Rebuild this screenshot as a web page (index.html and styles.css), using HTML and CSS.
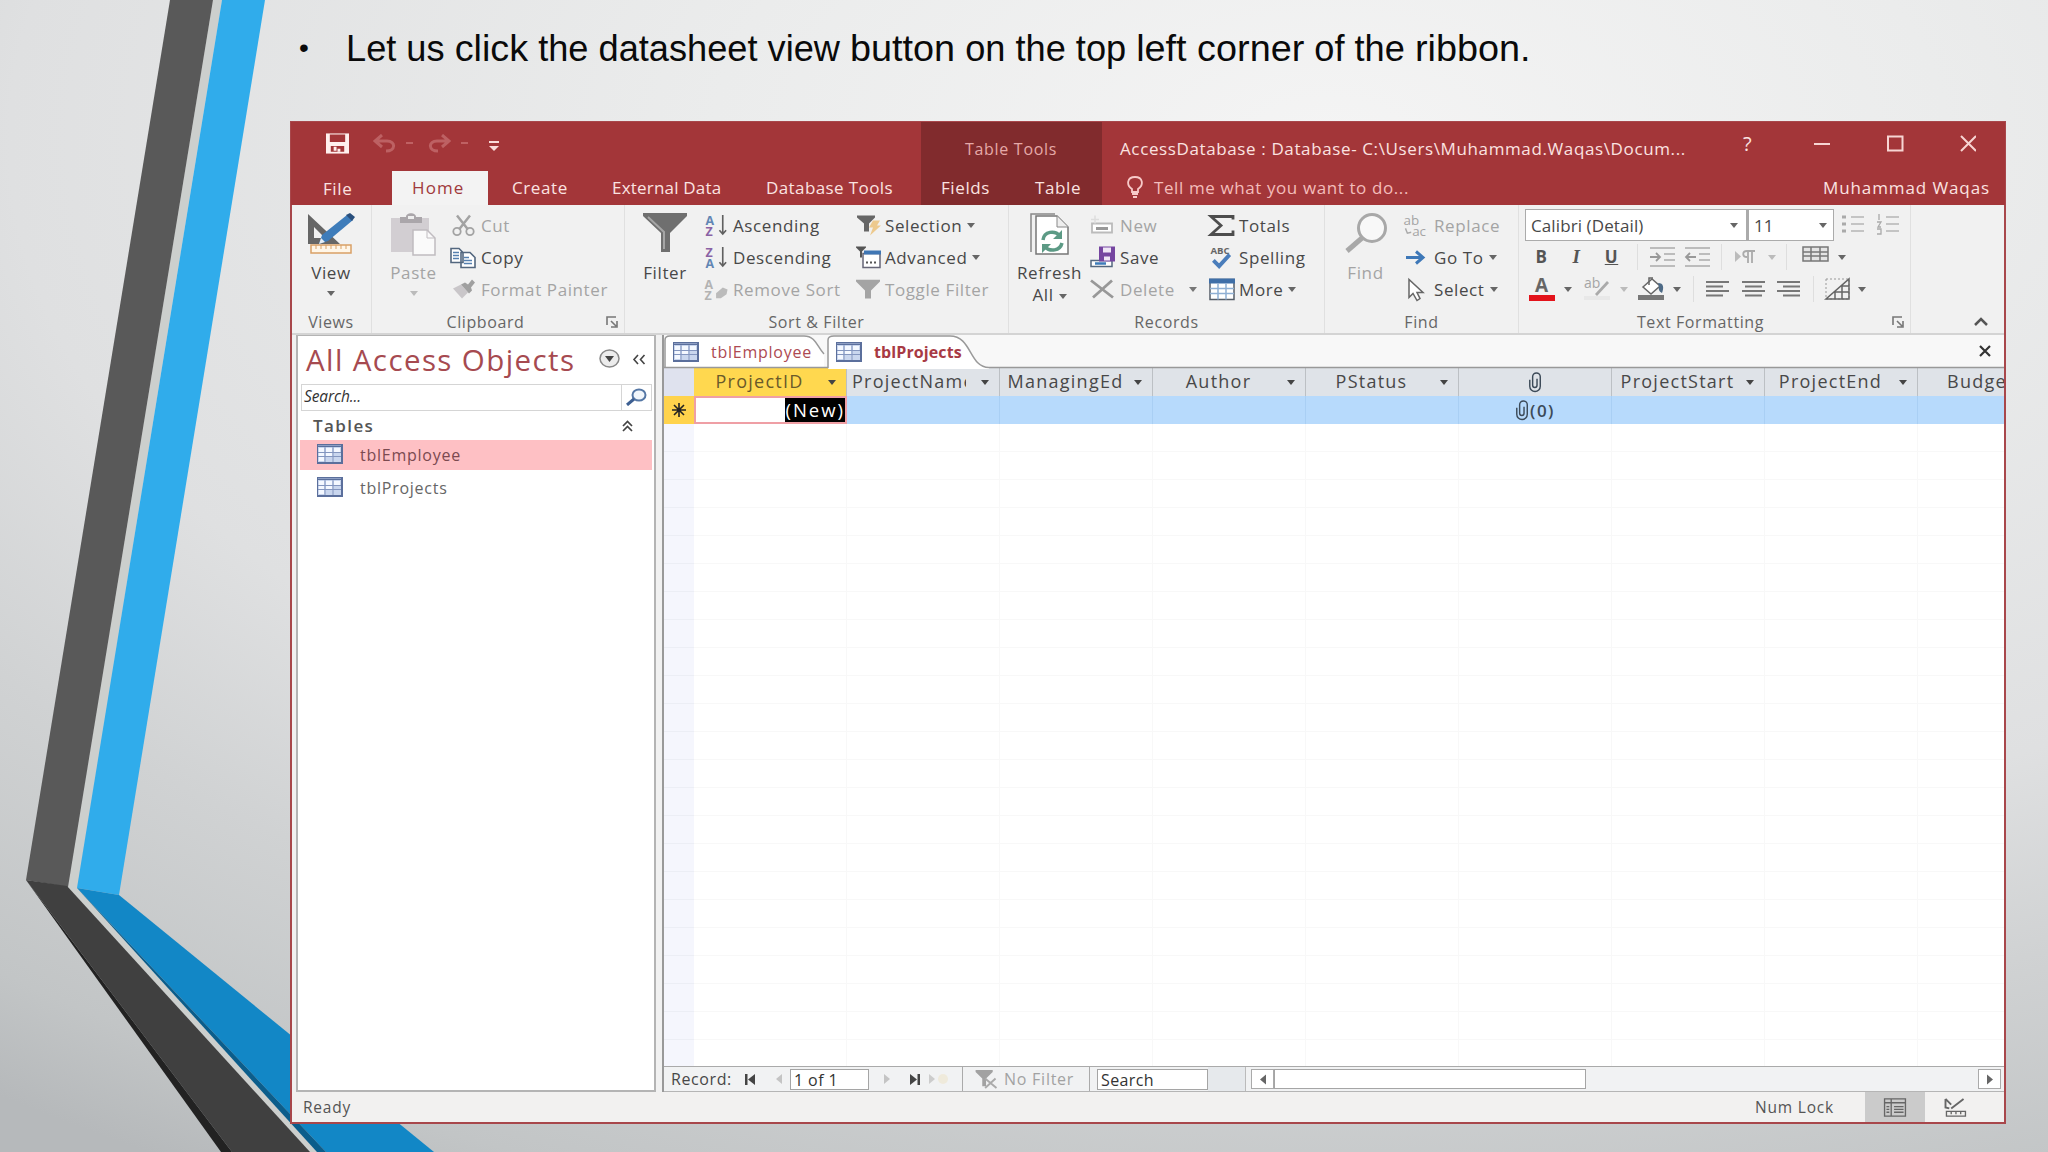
FILE: index.html
```html
<!DOCTYPE html>
<html lang="en">
<head>
  <meta charset="UTF-8">
  <title>Datasheet View</title>
  <link rel="stylesheet" href="styles.css">
</head>
<body>

  <!-- shared icons -->
  <svg class="defs">
    <symbol id="table" viewBox="0 0 26 20">
      <rect x="0" y="0" width="26" height="20" fill="#5b6f9c"/>
      <rect x="1" y="3" width="23" height="15" fill="#c9d6ee"/>
      <path d="M2 4h5v4H2zM2 9h5v3H2zM2 13h5v4H2zM9 4h6v4H9zM9 9h6v3H9zM17 4h6v4h-6z" fill="#f4f8ff"/>
      <path d="M1 8.5h23M1 12.5h23M8 3v15M16 3v15" stroke="#8496bf"/>
      <path d="M1 1.5h23" stroke="#8e9fc4"/>
    </symbol>
    <symbol id="funnel" viewBox="0 0 44 40"><path d="M0 0h44v3L27 20v19H18V20L0 3z" fill="#6f6f6f"/><path d="M5 4l16 15v17" fill="none" stroke="#a5a5a5" stroke-width="2"/></symbol>
    <symbol id="funnel-s" viewBox="0 0 24 20"><path d="M0 0h24v2l-9 9v8H9v-8L0 2z" fill="currentColor"/></symbol>
    <symbol id="down" viewBox="0 0 8 5"><path d="M0 0h8L4 5z" fill="currentColor"/></symbol>
    <symbol id="launcher" viewBox="0 0 12 12"><path d="M1 9V1h9M5 5l5 5M11 5v6H5" fill="none" stroke="#777" stroke-width="1.6"/></symbol>
    <symbol id="clip" viewBox="0 0 14 22"><path d="M1 8v7a5.500 5.500 0 0 0 11 0V5a4 4 0 0 0-8 0v9a2.300 2.300 0 0 0 4.600 0V7" fill="none" stroke="currentColor" stroke-width="1.500"/></symbol>
    <symbol id="lines" viewBox="0 0 24 18"><path d="M10 2h13M10 9h13M10 16h13" stroke="#b5b5b5" stroke-width="1.500"/></symbol>
  </svg>

  <!-- slide decoration -->
  <svg class="decor" viewBox="0 0 450 1152">
    <path d="M213 0h9L77 888l240 264h-7L68 887z" fill="#cccfcd"/>
    <path d="M170 0h43L68 887l-42-7z" fill="#595959"/>
    <path d="M26 880l41 6 243 266h-78z" fill="#404040"/>
    <path d="M26 880l206 272h-11z" fill="#222"/>
    <path d="M222 0h43L119 895l-42-7z" fill="#30aceb"/>
    <path d="M77 888l42 7 315 257H326z" fill="#1287c6"/>
    <path d="M77 888l249 264h-9z" fill="#0b5d8b"/>
  </svg>

  <div class="slide">
    <div class="bullet"><span class="dot">•</span><p>Let us <b>click</b> the datasheet view <b>button</b> on the top <b>left corner</b> of the <b>ribbon.</b></p></div>

    <div class="window">
      <div class="header">
        <div class="left">
          <div class="quick">
            <svg class="q-save" viewBox="0 0 24 21"><path d="M0 0h24v21H0z" fill="#fff0ee"/><path d="M4 1h16v8H4zM5 13h14v6H5z" fill="#a33639"/><path d="M8 14h3v4H8zM12 16h3v3h-3z" fill="#fff0ee"/></svg>
            <svg class="q-undo" viewBox="0 0 23 19"><path d="M9 1L2 7l7 6M2 7h12c9 0 9 10-1 10" fill="none" stroke="#bd6163" stroke-width="3"/></svg>
            <i></i>
            <svg class="q-redo" viewBox="0 0 23 19"><path d="M14 1l7 6-7 6M21 7H9C0 7 0 17 10 17" fill="none" stroke="#bd6163" stroke-width="3"/></svg>
            <i></i>
            <svg class="q-more" viewBox="0 0 10 10"><path d="M0 1h10" stroke="#fbdcda" stroke-width="2"/><path d="M0 5h10l-5 5z" fill="#fbdcda"/></svg>
          </div>
          <div class="tabs">
            <span class="t-file">File</span>
            <span class="t-home">Home</span>
            <span class="t-create">Create</span>
            <span class="t-ext">External Data</span>
            <span class="t-db">Database Tools</span>
          </div>
        </div>
        <div class="tools">
          <div class="tools-title">Table Tools</div>
          <div class="tabs"><span class="t-fields">Fields</span><span class="t-table">Table</span></div>
        </div>
        <div class="right">
          <div class="title">
            <span>AccessDatabase : Database- C:\Users\Muhammad.Waqas\Docum...</span>
            <em>?</em>
            <svg viewBox="0 0 162 18"><path d="M0 9h16M74 1.500h14.500v14H74zM147 1l15 15M162 1l-15 15" fill="none" stroke="#f7d5d3" stroke-width="2"/></svg>
          </div>
          <div class="tell">
            <svg viewBox="0 0 16 22"><path d="M5 16v-3C-1 9 0 1 8 1s9 8 3 12v3zM5 18h6M6 21h4" fill="none" stroke="#f7c9c8" stroke-width="1.800"/></svg>
            <span>Tell me what you want to do...</span>
            <span class="user">Muhammad Waqas</span>
          </div>
        </div>
      </div>

      <div class="ribbon">
        <div class="group g-views">
          <div class="body">
            <div class="big">
              <svg width="50" height="42" viewBox="0 0 50 42"><path d="M2 1l32 30H2zM8 14v11h11z" fill="#666" fill-rule="evenodd"/><path d="M13 31l3-9L41 2l6 5-25 21z" fill="#3e7cba"/><path d="M40 2l4-2 5 4-3 4z" fill="#294f7c"/><path d="M13 31l2-6 4 4z" fill="#e6eef6"/><path d="M5 32h40v8H5z" fill="#fff6e8" stroke="#d9a066" stroke-width="1.500"/><path d="M10 32v4M15 32v4M20 32v4M25 32v4M30 32v4M35 32v4M40 32v4" stroke="#d9a066"/></svg>
              <span>View</span>
              <svg class="dn"><use href="#down"/></svg>
            </div>
          </div>
          <div class="label">Views</div>
        </div>

        <div class="group g-clip">
          <div class="body">
            <div class="big off">
              <svg width="46" height="44" viewBox="0 0 46 44"><path d="M0 5h38v34H0z" fill="#d2ced2"/><path d="M9 4h6c0-5 10-5 10 0h6v6H9z" fill="#aaa6aa"/><path d="M17 3h6v3h-6z" fill="#eee"/><path d="M22 17h14l8 8v17H22z" fill="#fafafa" stroke="#c0bcc0" stroke-width="1.500"/><path d="M36 17v8h8" fill="none" stroke="#c0bcc0"/></svg>
              <span>Paste</span>
              <svg class="dn"><use href="#down"/></svg>
            </div>
            <div class="col">
              <div class="cmd off"><svg viewBox="0 0 26 22"><path d="M7 1l11 14M20 1L9 15" stroke="#a3a3a3" stroke-width="2.500"/><circle cx="7" cy="17" r="3.700" fill="none" stroke="#a3a3a3" stroke-width="1.800"/><circle cx="20" cy="17" r="3.700" fill="none" stroke="#a3a3a3" stroke-width="1.800"/></svg>Cut</div>
              <div class="cmd"><svg viewBox="0 0 26 22"><path d="M1 2h8l4 4v10H1zM11 6h9l5 5v10H11z" fill="#fff" stroke="#53677f" stroke-width="1.600"/><path d="M3 6h6M3 9h6M3 12h6M14 11h5M14 14h8M14 17h8" stroke="#5580b0" stroke-width="1.300"/></svg>Copy</div>
              <div class="cmd off"><svg viewBox="0 0 26 22"><path d="M3 10l8-4 7 8-6 6z" fill="#c9c6c9"/><path d="M11 6l4-2 3 2 4-5 3 3-4 5 1 3-3 3z" fill="#a0a0a0"/></svg>Format Painter</div>
            </div>
          </div>
          <div class="label">Clipboard</div>
          <svg class="launch"><use href="#launcher"/></svg>
        </div>

        <div class="group g-sort">
          <div class="body">
            <div class="big">
              <svg width="44" height="42" viewBox="0 0 44 42"><use href="#funnel" width="44" height="40"/></svg>
              <span>Filter</span>
            </div>
            <div class="col c1">
              <div class="cmd"><svg viewBox="0 0 26 24"><text x="1" y="11" class="az bl">A</text><text x="1" y="23" class="az pu">Z</text><path d="M19 1v20M15.500 17l3.500 4 3.500-4" fill="none" stroke="#606060" stroke-width="1.700"/></svg>Ascending</div>
              <div class="cmd"><svg viewBox="0 0 26 24"><text x="1" y="11" class="az pu">Z</text><text x="1" y="23" class="az bl">A</text><path d="M19 1v20M15.500 17l3.500 4 3.500-4" fill="none" stroke="#606060" stroke-width="1.700"/></svg>Descending</div>
              <div class="cmd off"><svg viewBox="0 0 26 24"><text x="0" y="11" class="az gy">A</text><text x="0" y="23" class="az gy">Z</text><path d="M12 16l7-6 5 2-1 5-6 4h-5z" fill="#bbb"/></svg>Remove Sort</div>
            </div>
            <div class="col c2">
              <div class="cmd"><svg viewBox="0 0 26 22"><path d="M1 1h18v2l-6 6v8H8V9L1 3z" fill="#666"/><path d="M17 6h7l-3 5h4L14 21l3-8h-4z" fill="#edc98d"/></svg>Selection<svg class="dn"><use href="#down"/></svg></div>
              <div class="cmd"><svg viewBox="0 0 26 22"><path d="M0 0h10v1L6 5v6H4V5L0 1z" fill="#555"/><path d="M7 7h17v14H7z" fill="#fff" stroke="#667" stroke-width="1.500"/><path d="M8 4h17v4H8z" fill="#3f76b4"/><path d="M10 16h2M14 16h2M18 16h2" stroke="#555" stroke-width="2"/></svg>Advanced<svg class="dn"><use href="#down"/></svg></div>
              <div class="cmd off"><svg viewBox="0 0 26 22"><use href="#funnel-s" y="1" width="24" height="20"/></svg>Toggle Filter</div>
            </div>
          </div>
          <div class="label">Sort &amp; Filter</div>
        </div>

        <div class="group g-rec">
          <div class="body">
            <div class="big">
              <svg width="40" height="43" viewBox="0 0 40 43"><path d="M1 39V1h24" fill="none" stroke="#888" stroke-width="1.500"/><path d="M6 3h21l11 11v27H6z" fill="#fff" stroke="#777" stroke-width="1.500"/><path d="M27 3v11h11" fill="#eee" stroke="#888"/><path d="M13 27c1-9 12-10 17-4M32 30c-2 8-12 9-17 4" fill="none" stroke="#5c9a85" stroke-width="3.500"/><path d="M32 17v9h-9zM12 40v-9h9z" fill="#5c9a85"/></svg>
              <span>Refresh</span>
              <span class="all">All<svg class="dn"><use href="#down"/></svg></span>
            </div>
            <div class="col c1">
              <div class="cmd off"><svg viewBox="0 0 26 22"><path d="M2 9h20v9H2z" fill="#fff" stroke="#bbb" stroke-width="1.800"/><path d="M6 14h12" stroke="#999" stroke-width="3"/><path d="M5 1v8M1 5h8" stroke="#ddd" stroke-width="1.500"/></svg>New</div>
              <div class="cmd"><svg viewBox="0 0 26 22"><path d="M1 14h21v6H1z" fill="#fff" stroke="#53677f" stroke-width="1.500"/><path d="M5 17h11" stroke="#3e7cba" stroke-width="2.500"/><path d="M9 0h16v15H9z" fill="#7545a0"/><path d="M13 1h8v5h-8zM14 10h6v4h-6z" fill="#eee5f5"/></svg>Save</div>
              <div class="cmd off del"><svg viewBox="0 0 26 22"><path d="M1 2l22 17M22 2L3 19" stroke="#989898" stroke-width="2.800"/></svg>Delete<svg class="dn"><use href="#down"/></svg></div>
            </div>
            <div class="col c2">
              <div class="cmd"><svg viewBox="0 0 26 22"><path d="M24 5V2H2l10 9L2 20h22v-4" fill="none" stroke="#4d4d4d" stroke-width="2.800"/></svg>Totals</div>
              <div class="cmd"><svg viewBox="0 0 26 24"><text x="1" y="8" class="abc">ABC</text><path d="M4 15l6 6L21 9" fill="none" stroke="#4a7dbb" stroke-width="4"/></svg>Spelling</div>
              <div class="cmd"><svg viewBox="0 0 26 22"><path d="M1 1h24v20H1z" fill="#fff" stroke="#555d68" stroke-width="1.500"/><path d="M0 0h26v5H0z" fill="#3f6fa8"/><path d="M1 10h24M1 15h24M9 5v16M17 5v16" stroke="#8fb0d4" stroke-width="1.500"/></svg>More<svg class="dn"><use href="#down"/></svg></div>
            </div>
          </div>
          <div class="label">Records</div>
        </div>

        <div class="group g-find">
          <div class="body">
            <div class="big off">
              <svg width="44" height="42" viewBox="0 0 44 42"><circle cx="28" cy="15" r="13.500" fill="#f8f8f8" stroke="#a8a8a8" stroke-width="3"/><path d="M18 25L3 38" stroke="#a8a8a8" stroke-width="5"/></svg>
              <span>Find</span>
            </div>
            <div class="col">
              <div class="cmd off"><svg viewBox="0 0 26 24"><text x="0" y="11" class="rep">ab</text><text x="9" y="23" class="rep">ac</text><path d="M2 15l2 5 4-1" fill="none" stroke="#aaa" stroke-width="1.500"/></svg>Replace</div>
              <div class="cmd"><svg viewBox="0 0 26 22"><path d="M3 11h17M13 5l7 6-7 6" fill="none" stroke="#3e78b8" stroke-width="3"/></svg>Go To<svg class="dn"><use href="#down"/></svg></div>
              <div class="cmd"><svg viewBox="0 0 26 22"><path d="M6 1v18l4-4 4 7 3-2-3-6h6z" fill="#fff" stroke="#666" stroke-width="1.500"/></svg>Select<svg class="dn"><use href="#down"/></svg></div>
            </div>
          </div>
          <div class="label">Find</div>
        </div>

        <div class="group g-text">
          <div class="fmt">
            <div class="combo font">Calibri (Detail)<svg class="dn"><use href="#down"/></svg></div>
            <div class="combo size">11<svg class="dn"><use href="#down"/></svg></div>
            <svg class="ml7" width="24" height="22" viewBox="0 0 24 22"><use href="#lines" width="24" height="18" y="1"/><path d="M1 3h4M1 10h4M1 17h4" stroke="#aaa" stroke-width="3"/></svg>
            <svg class="ml11" width="24" height="22" viewBox="0 0 24 22"><use href="#lines" width="24" height="18" y="1"/><path d="M3 0v6M1 8h4l-3 5h3M1 15h4v5H1" fill="none" stroke="#aaa" stroke-width="1.300"/></svg>
          </div>
          <div class="fmt row2">
            <strong>B</strong><strong class="it">I</strong><strong class="un">U</strong>
            <i class="sep"></i>
            <svg class="ml11" width="27" height="20" viewBox="0 0 27 20"><path d="M1 1h25M15 7h11M15 13h11M1 19h25" stroke="#aaa" stroke-width="1.600"/><path d="M1 10h10M7 6l4 4-4 4" fill="none" stroke="#999" stroke-width="1.800"/></svg>
            <svg class="ml8" width="27" height="20" viewBox="0 0 27 20"><path d="M1 1h25M15 7h11M15 13h11M1 19h25" stroke="#aaa" stroke-width="1.600"/><path d="M12 10H2M6 6l-4 4 4 4" fill="none" stroke="#999" stroke-width="1.800"/></svg>
            <i class="sep"></i>
            <svg class="ml12" width="22" height="14" viewBox="0 0 22 14"><path d="M1 1v11l6-5.500z" fill="#bbb"/><path d="M14 13V1M18 13V1M21 1h-8c-5 0-5 6 0 6" fill="none" stroke="#aaa" stroke-width="1.800"/></svg>
            <svg class="dn lt ml12"><use href="#down"/></svg>
            <i class="sep"></i>
            <svg class="grid-i" width="27" height="16" viewBox="0 0 27 16"><path d="M1 1h25v14H1zM1 6h25M1 10h25M9 1v14M18 1v14" fill="#e4e4e4" stroke="#777" stroke-width="1.500"/></svg>
            <svg class="dn ml9"><use href="#down"/></svg>
          </div>
          <div class="fmt row3">
            <svg width="26" height="24" viewBox="0 0 26 24"><text x="6" y="15" class="bigA">A</text><path d="M0 18h26v6H0z" fill="#e3131b"/></svg>
            <svg class="dn ml9"><use href="#down"/></svg>
            <svg class="ml12" width="27" height="24" viewBox="0 0 27 24"><text x="0" y="11" class="rep">ab</text><path d="M11 17l12-13 2 2-12 13z" fill="#aaa"/><path d="M0 19h26v4H0z" fill="#e8e8e8"/></svg>
            <svg class="dn lt ml9"><use href="#down"/></svg>
            <svg class="ml10" width="27" height="24" viewBox="0 0 27 24"><path d="M5 10l9-8 8 7-9 8z" fill="#fff" stroke="#666" stroke-width="1.500"/><path d="M11 8V1h4" fill="none" stroke="#666" stroke-width="1.500"/><path d="M20 6c6 0 6 5 4 10-2-1-4-3-3-7z" fill="#4d6a86"/><path d="M0 18h26v5H0z" fill="#777"/></svg>
            <svg class="dn ml8"><use href="#down"/></svg>
            <i class="sep wide"></i>
            <svg class="ml12" width="24" height="18" viewBox="0 0 24 18"><path d="M0 2h23M0 6.500h17M0 11h23M0 15.500h17" stroke="#777" stroke-width="1.800"/></svg>
            <svg class="ml12" width="24" height="18" viewBox="0 0 24 18"><path d="M0 2h23M3 6.500h17M0 11h23M3 15.500h17" stroke="#777" stroke-width="1.800"/></svg>
            <svg class="ml11" width="24" height="18" viewBox="0 0 24 18"><path d="M0 2h23M6 6.500h17M0 11h23M6 15.500h17" stroke="#777" stroke-width="1.800"/></svg>
            <i class="sep wide"></i>
            <svg class="ml11" width="25" height="22" viewBox="0 0 25 22"><path d="M1 1h23v20H1z" fill="none" stroke="#999" stroke-dasharray="2 2"/><path d="M24 1v20H1zM17 8v13M10 14v7M10 14h14M17 8h7" fill="none" stroke="#666" stroke-width="1.500"/></svg>
            <svg class="dn ml8"><use href="#down"/></svg>
          </div>
          <div class="label">Text Formatting</div>
          <svg class="launch"><use href="#launcher"/></svg>
        </div>
        <svg class="collapse" viewBox="0 0 14 9"><path d="M1 8l6-6 6 6" fill="none" stroke="#555" stroke-width="2.500"/></svg>
      </div>

      <div class="work">
        <div class="nav">
          <div class="nav-head">
            <span>All Access Objects</span>
            <svg class="circ" viewBox="0 0 21 19"><ellipse cx="10.500" cy="9.500" rx="9.500" ry="8.500" fill="#ececec" stroke="#888" stroke-width="1.500"/><path d="M6 7h9l-4.500 6z" fill="#444"/></svg>
            <svg class="chev" viewBox="0 0 14 11"><path d="M6 1L2 5.500 6 10M12.500 1l-4 4.500 4 4.500" fill="none" stroke="#444" stroke-width="1.600"/></svg>
          </div>
          <div class="nav-search"><span>Search...</span><div><svg viewBox="0 0 22 18"><ellipse cx="14" cy="7" rx="6.500" ry="5.500" fill="#f1f6fb" stroke="#5577a5" stroke-width="2"/><path d="M9 11l-7 6" stroke="#3d5f92" stroke-width="3"/></svg></div></div>
          <div class="nav-group"><span>Tables</span><svg viewBox="0 0 11 12"><path d="M1 6l4.500-4.500L10 6M1 11l4.500-4.500L10 11" fill="none" stroke="#444" stroke-width="1.700"/></svg></div>
          <div class="nav-item on"><svg><use href="#table"/></svg>tblEmployee</div>
          <div class="nav-item"><svg><use href="#table"/></svg>tblProjects</div>
        </div>

        <div class="doc">
          <div class="doc-tabs">
            <svg class="shape" viewBox="0 0 1340 34"><path d="M1 33V5Q1 1 6 1H140C152 1 153 12 160 19V33z" fill="#fff"/><path d="M1 32V5Q1 1 6 1H140C152 1 153 12 160 19" fill="none" stroke="#999" stroke-width="1.500"/><path d="M164 34V5Q164 1 170 1H286C308 1 305 32 325 32.500V34z" fill="#fff"/><path d="M0 32.500H164V5Q164 1 170 1H286C308 1 305 32.500 325 32.500H1340" fill="none" stroke="#999" stroke-width="1.500"/></svg>
            <div class="dt"><svg><use href="#table"/></svg>tblEmployee</div>
            <div class="dt on"><svg><use href="#table"/></svg>tblProjects</div>
            <svg class="x" viewBox="0 0 12 12"><path d="M1 1l10 10M11 1L1 11" stroke="#333" stroke-width="2.200"/></svg>
          </div>
          <div class="row head">
            <div class="sel"></div>
            <div class="cell cur"><span>ProjectID</span><svg class="dn"><use href="#down"/></svg></div>
            <div class="cell"><span class="cut">ProjectName</span><svg class="dn"><use href="#down"/></svg></div>
            <div class="cell"><span>ManagingEd</span><svg class="dn"><use href="#down"/></svg></div>
            <div class="cell"><span>Author</span><svg class="dn"><use href="#down"/></svg></div>
            <div class="cell"><span>PStatus</span><svg class="dn"><use href="#down"/></svg></div>
            <div class="cell att"><svg class="clip"><use href="#clip"/></svg></div>
            <div class="cell"><span>ProjectStart</span><svg class="dn"><use href="#down"/></svg></div>
            <div class="cell"><span>ProjectEnd</span><svg class="dn"><use href="#down"/></svg></div>
            <div class="cell last"><span>Budget</span></div>
          </div>
          <div class="row new">
            <div class="sel"><svg viewBox="0 0 14 14"><path d="M7 0v14M0 7h14M2 2l10 10M12 2L2 12" stroke="#222" stroke-width="1.600"/></svg></div>
            <div class="cell edit"><span>(New)</span></div>
            <div class="cell"></div>
            <div class="cell"></div>
            <div class="cell"></div>
            <div class="cell"></div>
            <div class="cell att"><svg class="clip"><use href="#clip"/></svg>(0)</div>
            <div class="cell"></div>
            <div class="cell"></div>
            <div class="cell last"></div>
          </div>
          <div class="empty"><div class="sel"></div></div>
          <div class="record">
            <span class="r-lab">Record:</span>
            <svg class="r-first" viewBox="0 0 12 11"><path d="M1 0h2.500v11H1zM11 0v11L4 5.500z" fill="#444"/></svg>
            <svg class="r-prev" viewBox="0 0 6 10"><path d="M6 0v10L0 5z" fill="#c4c4c4"/></svg>
            <div class="box r-num">1 of 1</div>
            <svg class="r-next" viewBox="0 0 6 10"><path d="M0 0v10l6-5z" fill="#c4c4c4"/></svg>
            <svg class="r-last" viewBox="0 0 12 11"><path d="M8.500 0H11v11H8.500zM1 0v11l7-5.500z" fill="#444"/></svg>
            <svg class="r-add" viewBox="0 0 22 12"><path d="M0 1v10l6-5z" fill="#ccc"/><circle cx="14" cy="6" r="5" fill="#efeadb"/></svg>
            <div class="r-filter"><svg viewBox="0 0 24 20"><path d="M0 0h18v2l-7 7v8H7V9L0 2z" fill="#a2a2a2"/><path d="M10 9l12 10M21 9L10 19" stroke="#aaa" stroke-width="2"/></svg>No Filter</div>
            <div class="box r-search">Search</div>
            <div class="r-gap"></div>
            <div class="scroll">
              <div class="arr"><svg viewBox="0 0 6 10"><path d="M6 0v10L0 5z" fill="#666"/></svg></div>
              <div class="thumb"></div>
              <div class="arr end"><svg viewBox="0 0 6 10"><path d="M0 0v10l6-5z" fill="#666"/></svg></div>
            </div>
          </div>
        </div>
      </div>

      <div class="status">
        <span>Ready</span>
        <span class="num">Num Lock</span>
        <div class="view on"><svg viewBox="0 0 24 20"><path d="M1 1h22v18H1zM1 5h22M8 1v18M11 9h10M11 12h10M11 15h10M3 9h3M3 12h3M3 15h3" fill="none" stroke="#666" stroke-width="1.400"/></svg></div>
        <div class="view"><svg viewBox="0 0 24 20"><path d="M2 1v9l4 1M2 1l6 6M8 11L21 1" fill="none" stroke="#666" stroke-width="2"/><path d="M3 14h20v5H3zM8 14v3M13 14v3M18 14v3" fill="none" stroke="#666" stroke-width="1.400"/></svg></div>
      </div>
    </div>
  </div>

</body>
</html>
```
FILE: styles.css
```css
* {
  box-sizing: border-box;
}

body {
  margin: 0;
  width: 2048px;
  height: 1152px;
  overflow: hidden;
  position: relative;
  font-family: "Open Sans", "Noto Sans", sans-serif;
  font-size: 17px;
  font-weight: 500;
  letter-spacing: 0.6px;
  color: #484848;
  background: radial-gradient(ellipse 2200px 1200px at 1330px 140px, #f4f4f4 0%, #ebecec 28%, #dfe0e1 60%, #d0d2d3 75%, #c2c5c6 92%, #b6b9bb 100%);
}

svg {
  display: block;
  flex: none;
}

.defs {
  position: absolute;
  width: 0;
  height: 0;
}

.decor {
  position: absolute;
  left: 0;
  top: 0;
  width: 450px;
  height: 1152px;
}

.slide {
  position: relative;
  padding-left: 290px;
}

/* slide text */
.bullet {
  height: 121px;
  display: flex;
  padding: 26px 0 0 9px;
  font-family: "Liberation Sans", Arial, sans-serif;
  font-size: 36.2px;
  font-weight: normal;
  letter-spacing: 0;
  line-height: 44px;
  color: #0a0a0a;
}

.bullet .dot {
  width: 47px;
  font-size: 28px;
}

.bullet p {
  margin: 0;
  white-space: nowrap;
}

.bullet b {
  font-weight: normal;
  font-size: 37.8px;
}

/* access window */
.window {
  width: 1716px;
  height: 1003px;
  border: 2px solid #a8474b;
  background: #f1f1f1;
  display: flex;
  flex-direction: column;
}

.header {
  height: 83px;
  margin: -1px -1px 0;
  background: #a33639;
  display: flex;
  color: #fbe3e1;
  flex: none;
}

.header .left {
  width: 630px;
}

.quick {
  height: 49px;
  display: flex;
  align-items: center;
  padding: 1px 0 8px 35px;
}

.q-save { width: 23px; height: 21px; }
.q-undo { width: 23px; height: 19px; margin-left: 24px; }
.q-redo { width: 23px; height: 19px; margin-left: 15px; }
.q-more { width: 10px; height: 10px; margin: 6px 0 0 21px; }

.quick i {
  width: 7px;
  height: 2px;
  margin-left: 10px;
  background: #bf6163;
}

.tabs {
  display: flex;
  height: 34px;
  line-height: 33px;
}

.t-file { width: 101px; padding-left: 32px; padding-top: 1px; }
.t-home { width: 96px; padding-left: 20px; letter-spacing: 1.1px; background: #f3f3f3; color: #a0393c; }
.t-create { margin-left: 24px; width: 100px; }
.t-ext { width: 154px; letter-spacing: 0.2px; white-space: nowrap; }
.t-db { white-space: nowrap; letter-spacing: 0.4px; }

.tools {
  width: 181px;
  background: #812b2d;
}

.tools-title {
  height: 49px;
  padding: 3px 0 0 44px;
  line-height: 48px;
  font-size: 16px;
  letter-spacing: 0.7px;
  color: #e5a9a8;
}

.t-fields { width: 94px; padding-left: 20px; }
.t-table { padding-left: 20px; }

.header .right {
  flex: 1;
}

.title {
  display: flex;
  height: 49px;
  line-height: 54px;
  padding-left: 18px;
}

.title span {
  width: 623px;
  white-space: nowrap;
  letter-spacing: 0.62px;
}

.title em {
  font-style: normal;
  font-size: 20px;
  line-height: 44px;
  width: 71px;
}

.title svg {
  width: 162px;
  height: 18px;
  margin-top: 13px;
}

.tell {
  display: flex;
  height: 34px;
  line-height: 33px;
  padding-left: 25px;
  color: #f3bdbb;
}

.tell svg {
  width: 16px;
  height: 22px;
  margin: 5px 11px 0 0;
}

.tell .user {
  margin-left: auto;
  padding-right: 15px;
  letter-spacing: 0.9px;
  color: #fbe3e1;
}

/* ribbon */
.ribbon {
  height: 130px;
  display: flex;
  padding-left: 2px;
  flex: none;
  border-bottom: 2px solid #d4d4d4;
}

.group {
  position: relative;
  border-right: 1px solid #e0e0e0;
  padding-top: 4px;
}

.g-views { width: 78px; }
.g-clip { width: 253px; }
.g-sort { width: 384px; }
.g-rec { width: 316px; }
.g-find { width: 194px; }
.g-text { width: 392px; }

.body {
  display: flex;
  height: 98px;
}

.big {
  display: flex;
  flex-direction: column;
  align-items: center;
  width: 76px;
  padding-top: 4px;
  line-height: 22px;
}

.g-views .big { width: 74px; }
.big > svg:first-child { margin-bottom: 7px; }
.big .dn { margin-top: 7px; }
.g-clip .big { padding-left: 7px; }
.g-clip .big svg:first-child { margin-bottom: 5px; }
.g-sort .big { padding-left: 4px; }
.g-rec .big { padding-left: 5px; }
.g-find .big { padding-left: 5px; }
.g-rec .big > svg:first-child { margin-bottom: 6px; }

.all {
  display: flex;
}

.all .dn {
  margin: 10px 0 0 5px;
}

.col {
  margin-left: 2px;
}

.g-sort .col.c1 { margin-left: 3px; width: 152px; }
.g-rec .col.c1 { margin-left: 5px; width: 119px; }
.g-sort .col.c2, .g-rec .col.c2 { margin-left: 0; }

.cmd {
  display: flex;
  align-items: center;
  height: 32px;
  white-space: nowrap;
}

.cmd > svg:first-child {
  width: 26px;
  height: 23px;
  margin-right: 5px;
  overflow: visible;
}

.g-sort .cmd > svg:first-child { margin-right: 3px; }
.g-rec .cmd > svg:first-child { margin-right: 4px; }

.off, .cmd.off {
  color: #a4a4a4;
}

.dn {
  width: 8px;
  height: 5px;
  color: #666;
}

.cmd .dn { margin: 0 0 0 5px; }
.off .dn, .dn.lt { color: #bbb; }
.del .dn { color: #777; margin-left: 14px; }

.label {
  position: relative;
  line-height: 24px;
  height: 24px;
  margin-top: 3px;
  font-size: 16px;
  text-align: center;
  color: #666;
}

.g-views .label { padding-right: 3px; }
.g-clip .label { padding-right: 25px; }
.g-text .label { padding-right: 28px; margin-top: 5px; }

.launch {
  position: absolute;
  right: 6px;
  bottom: 5px;
  width: 12px;
  height: 12px;
}

.az { font: bold 13px "Open Sans", sans-serif; letter-spacing: 0; }
.bl { fill: #6286b4; }
.pu { fill: #8a62a5; }
.gy { fill: #b3b3b3; }
.abc { font: bold 10px "Open Sans", sans-serif; fill: #666; letter-spacing: 0; }
.rep { font: 500 14px "Open Sans", sans-serif; fill: #a5a5a5; letter-spacing: 0; }
.bigA { font: bold 19px "Open Sans", sans-serif; fill: #666; }

.fmt {
  display: flex;
  align-items: center;
  height: 32px;
  padding-left: 6px;
}

.fmt > svg { overflow: visible; }

.combo {
  display: flex;
  align-items: center;
  justify-content: space-between;
  height: 32px;
  border: 1px solid #ababab;
  background: #fff;
  padding: 0 8px 0 5px;
  letter-spacing: 0.1px;
}

.font { width: 222px; }
.size { width: 87px; border-left-width: 2px; }
.size .dn { margin-right: -2px; }
.ml7 { margin-left: 7px; }
.ml8 { margin-left: 8px; }
.ml9 { margin-left: 9px; }
.ml10 { margin-left: 10px; }
.ml11 { margin-left: 11px; }
.ml12 { margin-left: 12px; }

.fmt strong {
  width: 35px;
  text-align: center;
  line-height: 22px;
  color: #555;
}

.row2 strong:first-child { margin-left: -1px; }
.fmt .it { font-family: "Liberation Serif", serif; font-style: italic; font-size: 19px; }
.fmt .un { text-decoration: underline; }

.row2, .row3 { height: 32px; }
.row3 { padding-left: 10px; }

.sep {
  width: 1px;
  height: 26px;
  margin-left: 10px;
  background: #dedede;
}

.sep.wide { margin-left: 12px; }
.row2 strong + .sep { margin-left: 8px; }
.grid-i { margin: -6px 0 0 15px; }

.collapse {
  width: 14px;
  height: 9px;
  margin: 112px 0 0 63px;
}

/* workspace */
.work {
  display: flex;
  height: 757px;
  padding-left: 4px;
  flex: none;
}

.nav {
  width: 361px;
  border: 2px solid #b4b4b4;
  background: #fff;
  border-top-width: 1px;
}

.nav-head {
  display: flex;
  height: 48px;
  padding-left: 8px;
  line-height: 48px;
  font-size: 29.5px;
  font-weight: 400;
  letter-spacing: 1.4px;
  color: #a64a50;
  white-space: nowrap;
}

.nav-head span { width: 293px; }
.circ { width: 21px; height: 19px; margin-top: 13px; }
.chev { width: 14px; height: 11px; margin: 18px 0 0 12px; }

.nav-search {
  display: flex;
  justify-content: space-between;
  height: 27px;
  margin: 0 2px 0 3px;
  border: 1px solid #d5d5d5;
  font-style: italic;
  font-size: 15.5px;
  letter-spacing: -0.1px;
  line-height: 23px;
  padding-left: 2px;
  color: #333;
}

.nav-search div {
  width: 30px;
  padding: 3px 5px 0 3px;
  border-left: 1px solid #d5d5d5;
}

.nav-search svg { width: 22px; height: 18px; }

.nav-group {
  display: flex;
  justify-content: space-between;
  align-items: center;
  height: 29px;
  padding: 0 21px 0 15px;
  font-weight: 600;
  letter-spacing: 1.4px;
  color: #555;
}

.nav-group svg { width: 11px; height: 12px; }

.nav-item {
  display: flex;
  align-items: center;
  height: 30px;
  margin: 0 2px 3px 2px;
  padding-left: 17px;
  font-size: 16px;
  letter-spacing: 0.75px;
  color: #666;
}

.nav-item.on { background: #fec0c4; color: #7b4a50; }
.nav-item svg { width: 26px; height: 20px; margin: -3px 17px 0 0; }

/* datasheet */
.doc {
  width: 1342px;
  margin-left: 6px;
  border-left: 2px solid #999;
  background: #fff;
  display: flex;
  flex-direction: column;
}

.doc-tabs {
  position: relative;
  display: flex;
  flex: none;
  height: 33px;
  background: #f8f8f8;
  font-size: 16px;
  letter-spacing: 0.75px;
  color: #ad4a52;
}

.shape {
  position: absolute;
  left: 0;
  top: 0;
  width: 1340px;
  height: 34px;
}

.dt {
  position: relative;
  display: flex;
  align-items: center;
  width: 163px;
  padding-left: 9px;
}

.dt svg { width: 26px; height: 20px; margin-right: 12px; }
.dt.on { width: auto; font-weight: 700; letter-spacing: 0.1px; color: #a83a44; }
.x { position: relative; width: 12px; height: 12px; margin: 10px 13px 0 auto; }

.row {
  display: flex;
  flex: none;
  overflow: hidden;
}

.sel { width: 30px; flex: none; }

.cell {
  width: 153px;
  flex: none;
  display: flex;
  align-items: center;
  border-right: 1px solid #bcc0c4;
}

.head {
  height: 28px;
  background: #dfe3e8;
  font-size: 18px;
  line-height: 26px;
  letter-spacing: 1.25px;
}

.head span {
  width: 131px;
  height: 28px;
  text-align: center;
  overflow: hidden;
  white-space: nowrap;
}

.head .cut { width: 119px; padding-left: 5px; margin-right: 12px; text-align: left; }
.head .sel { background: #dfe2ee; }
.head .cur { background: #ffd84f; color: #6a5a2a; }
.head .dn { color: #444; margin-left: 3px; }
.head .last span { text-align: left; padding-left: 29px; }

.new {
  height: 28px;
  background: #b7dafc;
}

.new .cell { border-right-color: #a9cff4; }
.new .sel { background: #ffd34c; padding: 7px 8px; }
.new .sel svg { width: 14px; height: 14px; }

.new .edit {
  justify-content: flex-end;
  background: #fff;
  border: 2px solid #ef9fa5;
}

.edit span {
  background: #000;
  color: #fff;
  line-height: 24px;
  font-size: 18.5px;
  letter-spacing: 2px;
}

.att { justify-content: center; color: #3c4a58; font-weight: 600; letter-spacing: 1.5px; }
.clip { width: 15px; height: 21px; }

.empty {
  flex: 1;
  background:
    repeating-linear-gradient(to right, transparent 0, transparent 152px, #f8f8f8 152px, #f8f8f8 153px) 30px 0,
    repeating-linear-gradient(to bottom, transparent 0, transparent 27px, #f8f8f8 27px, #f8f8f8 28px);
}

.empty .sel {
  height: 100%;
  background: repeating-linear-gradient(to bottom, #f5f6fd 0, #f5f6fd 27px, #eceef5 27px, #eceef5 28px);
}

.record {
  display: flex;
  align-items: center;
  height: 26px;
  flex: none;
  border-top: 1px solid #aaa;
  border-bottom: 1px solid #b5b5b5;
  background: #f1f2f3;
  font-size: 16px;
  letter-spacing: 0.4px;
  white-space: nowrap;
}

.r-lab { width: 80px; padding-left: 7px; letter-spacing: 0.6px; }
.r-first { width: 12px; height: 11px; }
.r-prev { width: 6px; height: 10px; margin-left: 20px; }
.r-next { width: 6px; height: 10px; margin-left: 15px; }
.r-last { width: 12px; height: 11px; margin-left: 19px; }
.r-add { width: 22px; height: 12px; margin-left: 8px; }

.box {
  height: 21px;
  line-height: 20px;
  border: 1px solid #a5a5a5;
  background: #fff;
  color: #333;
  padding-left: 3px;
}

.r-num { width: 79px; margin-left: 8px; }

.r-filter {
  display: flex;
  align-items: center;
  width: 128px;
  height: 24px;
  margin-left: 11px;
  padding-left: 12px;
  border-left: 1px solid #aaa;
  border-right: 1px solid #aaa;
  letter-spacing: 0.75px;
  color: #a2a2a2;
}

.r-filter svg { width: 24px; height: 19px; margin-right: 5px; }
.r-search { width: 111px; margin-left: 7px; }
.r-gap { width: 38px; height: 24px; border-right: 1px solid #bbb; background: #e6e9ec; }

.scroll {
  display: flex;
  flex: 1;
  margin-left: 5px;
  padding-right: 3px;
}

.arr {
  width: 23px;
  height: 20px;
  display: flex;
  align-items: center;
  justify-content: center;
  border: 1px solid #aaa;
  background: #fff;
}

.arr svg { width: 6px; height: 11px; }
.arr.end { margin-left: auto; }

.thumb {
  width: 312px;
  height: 20px;
  border: 1px solid #a5a5a5;
  background: #fff;
}

/* status bar */
.status {
  display: flex;
  align-items: center;
  flex: 1;
  padding-left: 11px;
  background: #f2f1f0;
  font-size: 15.5px;
  letter-spacing: 0.8px;
  color: #555;
}

.status .num { margin-left: auto; margin-right: 31px; }

.view {
  width: 60px;
  height: 100%;
  display: flex;
  align-items: center;
  justify-content: center;
}

.view.on { background: #cbcbcb; }
.view svg { width: 24px; height: 19px; }
.view:last-child { margin-right: 19px; }
```
